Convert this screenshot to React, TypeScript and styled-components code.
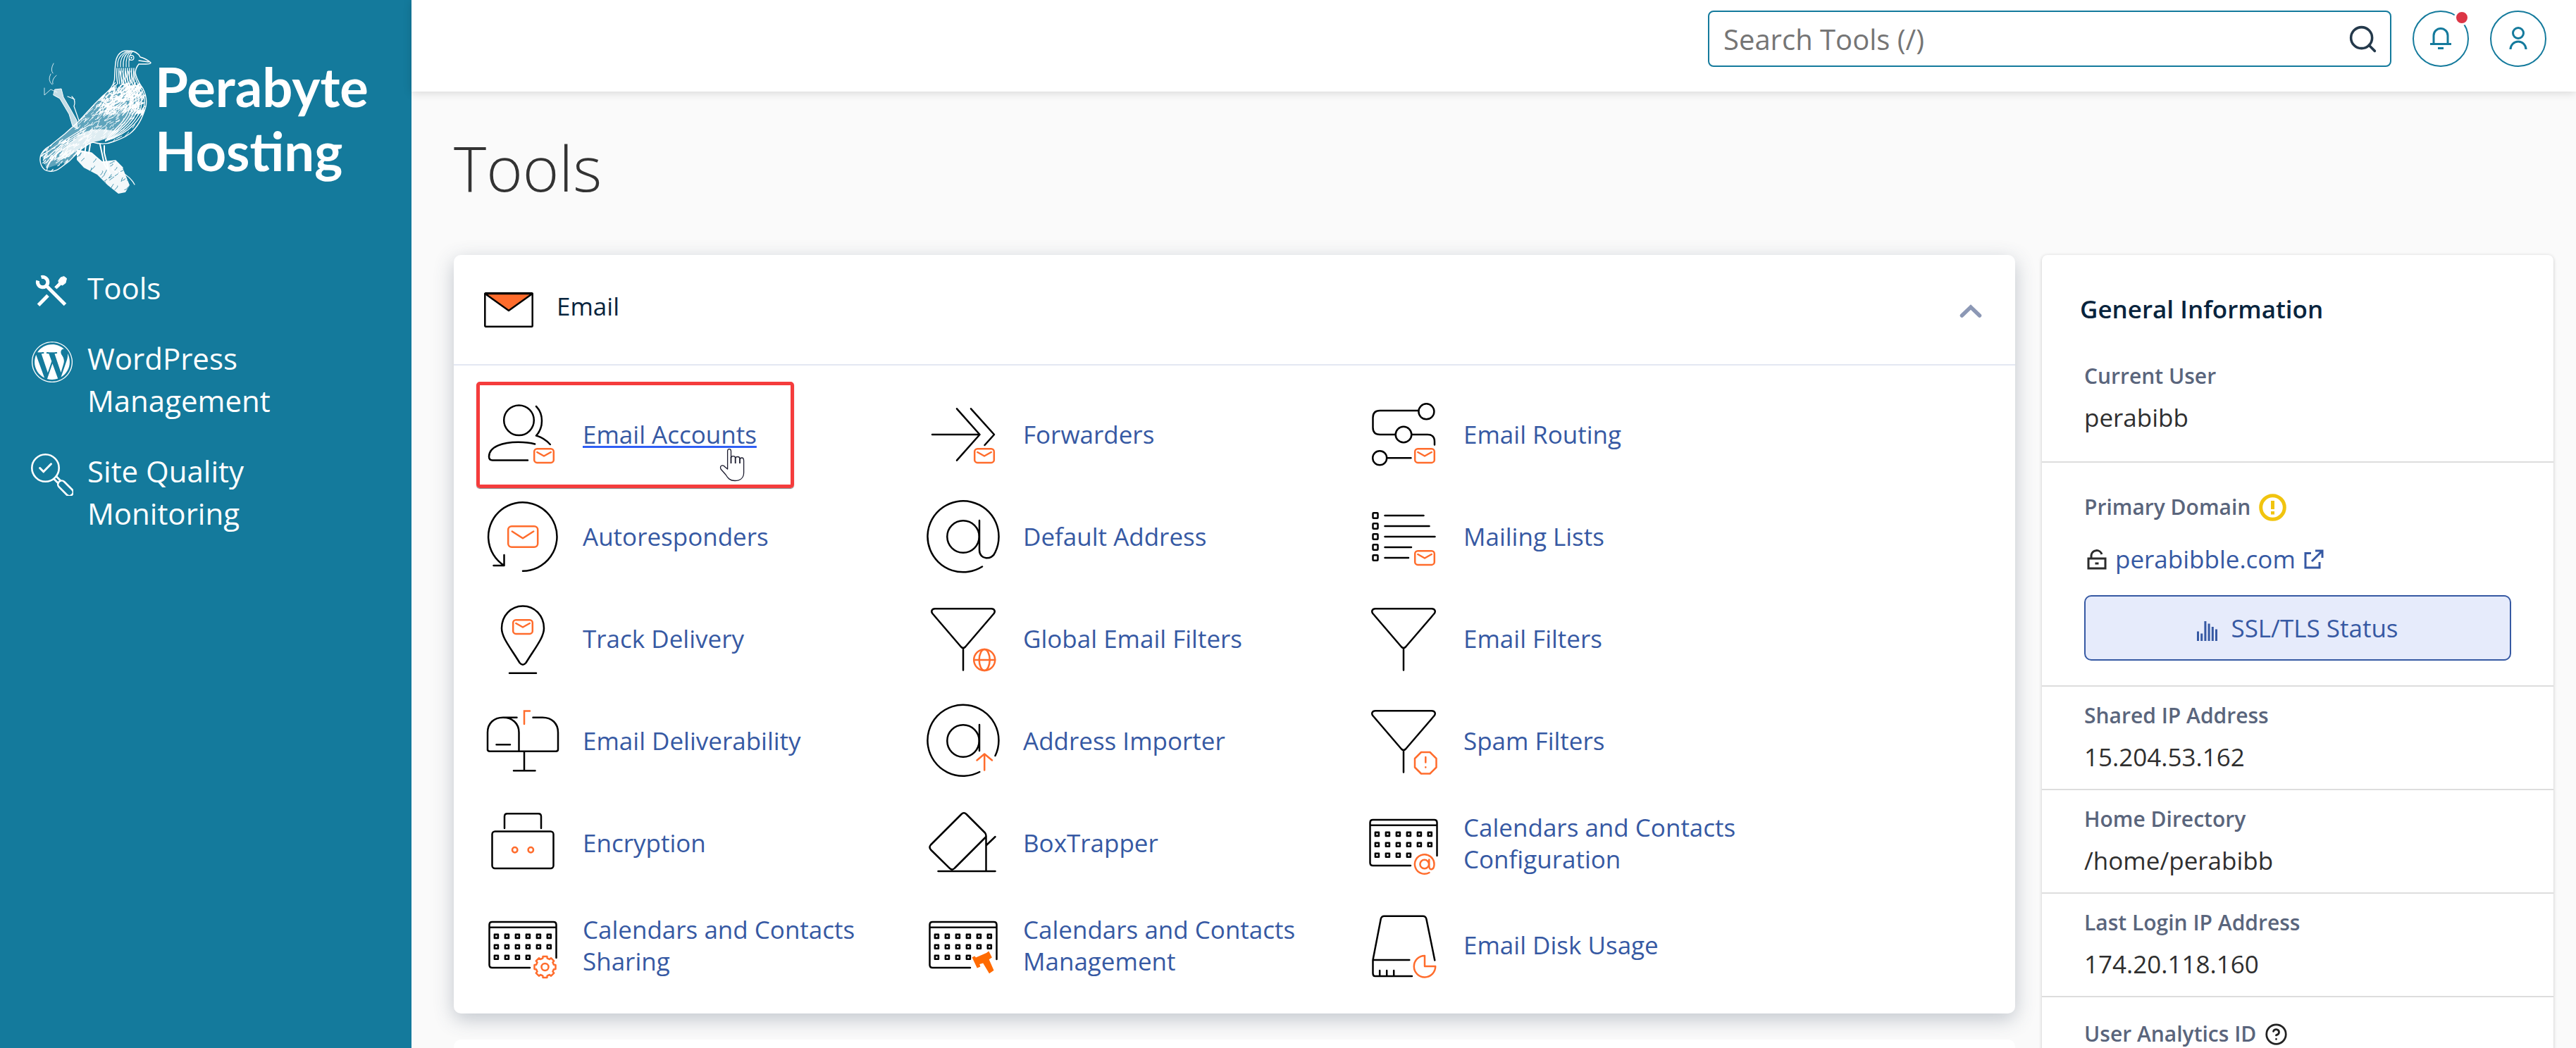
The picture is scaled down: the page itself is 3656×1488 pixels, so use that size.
import React from "react";
import styled, { createGlobalStyle } from "styled-components";
import { Search } from "lucide-react";
import { FaWordpress } from "react-icons/fa";

const color = {
  brand: "#147a9c",
  link: "#3659a3",
  ink: "#08243d",
  text: "#2f2f2f",
  muted: "#5a657c",
  orange: "#ff6c2c",
  page: "#fafafa",
};

const GlobalStyle = createGlobalStyle`
  *, *::before, *::after { box-sizing: border-box; }
  body {
    margin: 0;
    background: ${color.page};
    color: ${color.text};
    font-family: "Open Sans", "Noto Sans", sans-serif;
    font-size: 35px;
  }
  a { color: inherit; text-decoration: none; }
  button, input { font: inherit; }
`;

/* ---------- layout ---------- */

const Shell = styled.div`
  display: flex;
  height: 100vh;
  overflow: hidden;
`;

const Sidebar = styled.aside`
  flex: none;
  width: 584px;
  background: ${color.brand};
  color: #fff;
`;

const Page = styled.div`
  flex: 1;
  min-width: 0;
  display: flex;
  flex-direction: column;
`;

const Content = styled.main`
  flex: 1;
  min-height: 0;
  overflow: hidden;
  padding: 47px 32px 0 60px;
`;

const Title = styled.h1`
  margin: 0 0 63px;
  color: #333;
  font-size: 88px;
  font-weight: 300;
  line-height: 122px;
`;

const Columns = styled.div`
  display: grid;
  grid-template-columns: minmax(0, 1fr) 726px;
  align-items: start;
  gap: 38px;
`;

const Stack = styled.div`
  display: flex;
  flex-direction: column;
  gap: 37px;
`;

/* ---------- sidebar ---------- */

const Brand = styled.a`
  display: flex;
  align-items: flex-start;
  gap: 3px;
  padding: 71px 44px 84px 56px;
`;

const BrandName = styled.span`
  padding-top: 6px;
  font-family: Lato, "Open Sans", sans-serif;
  font-size: 76px;
  font-weight: 700;
  line-height: 91px;
`;

const Nav = styled.nav`
  display: flex;
  flex-direction: column;
`;

const NavLink = styled.a`
  display: flex;
  align-items: flex-start;
  gap: 20px;
  padding: 20px 60px 20px 44px;
  font-size: 42px;
  line-height: 60px;

  svg {
    flex: none;
    width: 60px;
    height: 60px;
    margin: 5px 0 -5px;
  }
`;

/* ---------- header ---------- */

const Topbar = styled.header`
  position: relative;
  display: flex;
  justify-content: flex-end;
  gap: 30px;
  padding: 15px 42px 35px;
  background: #fff;
  box-shadow: 0 2px 12px rgba(0, 0, 0, 0.14);
`;

const SearchBox = styled.label`
  display: flex;
  align-items: center;
  flex: 0 1 970px;
  height: 80px;
  padding: 0 16px 0 20px;
  border: 2px solid ${color.brand};
  border-radius: 8px;
  color: #24394b;
`;

const SearchInput = styled.input`
  flex: 1;
  min-width: 0;
  padding: 0;
  border: 0;
  outline: 0;
  background: none;
  font-size: 40px;

  &::placeholder { color: #757575; opacity: 1; }
`;

const RoundButton = styled.button`
  position: relative;
  display: flex;
  align-items: center;
  justify-content: center;
  width: 80px;
  height: 80px;
  padding: 0;
  border: 2px solid ${color.brand};
  border-radius: 50%;
  background: #fff;
  color: ${color.brand};
`;

const Badge = styled.span`
  position: absolute;
  top: -3px;
  right: -3px;
  width: 22px;
  height: 22px;
  border: 3px solid #fff;
  border-radius: 50%;
  background: #dc3545;
`;

/* ---------- tool group card ---------- */

const Card = styled.section`
  border-radius: 10px;
  background: #fff;
  box-shadow: 0 8px 28px rgba(60, 75, 100, 0.3);
`;

const NextCard = styled(Card)`
  height: 157px;
  box-shadow: none;
`;

const CardHeader = styled.button`
  display: flex;
  align-items: center;
  gap: 33px;
  width: 100%;
  height: 157px;
  padding: 0 47px 0 43px;
  border: 0;
  border-bottom: 2px solid #e3e7f2;
  background: none;
  color: ${color.ink};
  text-align: left;
`;

const CardTitle = styled.span`
  flex: 1;
  padding-bottom: 10px;
`;

const ToolGrid = styled.ul`
  display: grid;
  grid-template-columns: repeat(3, minmax(0, 32fr)) minmax(0, 15fr);
  grid-auto-rows: 145px;
  margin: 0;
  padding: 25px 0 25px 48px;
  list-style: none;
`;

const ToolCell = styled.li<{ $column: number }>`
  position: relative;
  grid-column: ${(p) => p.$column};
  display: flex;
  align-items: center;
`;

const ToolLink = styled.a<{ $hovered?: boolean }>`
  display: flex;
  align-items: center;
  gap: 35px;
  padding-right: 60px;
  color: ${color.link};
  line-height: 45px;

  span {
    text-decoration: ${(p) => (p.$hovered ? "underline" : "none")};
    text-decoration-color: #2f5ff5;
    text-decoration-thickness: 3px;
    text-underline-offset: 3px;
    text-decoration-skip-ink: none;
  }
`;

const ToolSvg = styled.svg`
  flex: none;
  width: 100px;
  height: 100px;
  overflow: visible;
  fill: none;
  stroke: #000;
  stroke-width: 2.5;
  stroke-linecap: round;
  stroke-linejoin: round;
`;

const Highlight = styled.span`
  position: absolute;
  top: -2px;
  left: -16px;
  width: 451px;
  height: 151px;
  border: 5px solid #f53c3c;
  border-radius: 5px;
  box-shadow: 0 1px 1px rgba(0, 0, 0, 0.5);
  pointer-events: none;
`;

const Pointer = styled.svg`
  position: absolute;
  top: 93px;
  left: 330px;
  width: 34px;
  height: 46px;
  overflow: visible;
`;

/* ---------- general information ---------- */

const InfoCard = styled.aside`
  border-radius: 8px;
  background: #fff;
  box-shadow: 0 1px 5px rgba(0, 0, 0, 0.2);
`;

const InfoTitle = styled.h2`
  margin: 0;
  padding: 52px 54px 29px;
  color: ${color.ink};
  font-size: 35px;
  font-weight: 600;
  line-height: 50px;
`;

const InfoList = styled.dl`
  margin: 0;
`;

const InfoRow = styled.div<{ $top?: number; $bottom?: number }>`
  padding: ${(p) => p.$top ?? 20}px 60px ${(p) => p.$bottom ?? 20}px;

  & + & { border-top: 2px solid #ddd; }
`;

const InfoLabel = styled.dt`
  display: flex;
  align-items: center;
  gap: 12px;
  height: 42px;
  color: ${color.muted};
  font-size: 30px;
  font-weight: 600;
  line-height: 42px;
`;

const InfoValue = styled.dd<{ $gap?: number }>`
  margin: ${(p) => p.$gap ?? 13}px 0 0;
  line-height: 50px;
`;

const DomainLine = styled.span`
  display: flex;
  align-items: center;
  gap: 12px;
  padding-left: 4px;
`;

const DomainLink = styled.a`
  display: flex;
  align-items: center;
  gap: 12px;
  color: ${color.link};
`;

const StatusButton = styled.button`
  display: flex;
  align-items: center;
  justify-content: center;
  gap: 19px;
  width: 100%;
  height: 93px;
  border: 2px solid ${color.link};
  border-radius: 10px;
  background: #e6ebfb;
  color: ${color.link};
  font-weight: 500;

  svg { margin-top: 8px; }
`;

/* ---------- drawings ---------- */

const Orange = ({ children }: { children: React.ReactNode }) => (
  <g stroke={color.orange}>{children}</g>
);

const MailBadge = ({ x = 0, y = 0 }: { x?: number; y?: number }) => (
  <g stroke={color.orange} transform={`translate(${x} ${y})`}>
    <rect x="66.2" y="70.3" width="27.6" height="19.6" rx="4" />
    <path d="M70.3 75 80 80.5 89.8 75" />
  </g>
);

const Calendar = ({ rightEnd = 68 }: { rightEnd?: number }) => (
  <>
    <path d={`M60 82H6.500Q2.500 82 2.500 78V21Q2.500 17 6.500 17H93.500Q97.500 17 97.500 21V${rightEnd}M2.500 24.700H97.500`} />
    {[37.4, 52.2, 67.2].map((cy, row) =>
      [12.4, 27.4, 42.4, 57.4, 72.4, 87.3]
        .slice(0, row === 2 ? 4 : 6)
        .map((cx) => (
          <rect key={`${cx}-${cy}`} x={cx - 2.5} y={cy - 2.5} width="5" height="5" strokeWidth="2.6" />
        ))
    )}
  </>
);

const Funnel = () => (
  <path d="M10 7.300H90C94.500 7.300 96 11 93.500 14.300L53 61.500Q50 64.500 47 61.500L6.500 14.300C4 11 5.500 7.300 10 7.300ZM50 63.500V94.500" />
);

const gearPath = (cx: number, cy: number) => {
  const points: string[] = [];
  for (let tooth = 0; tooth < 8; tooth++) {
    const middle = (tooth * Math.PI) / 4;
    [
      [-0.25, 12.8],
      [-0.19, 15.3],
      [0.19, 15.3],
      [0.25, 12.8],
    ].forEach(([turn, r]) => {
      const a = middle + turn;
      points.push(`${(cx + r * Math.cos(a)).toFixed(1)} ${(cy + r * Math.sin(a)).toFixed(1)}`);
    });
  }
  return `M${points.join("L")}Z`;
};

const drawings: Record<string, React.ReactNode> = {
  accounts: (
    <>
      <circle cx="44.500" cy="29.700" r="21.300" />
      <path d="M69 10Q77 18 77 30.500T69 51.500Q80 54.500 88.800 64M67.200 63.500C60 61.500 52 60.800 43.500 60.800C22 60.800 2 67 2 81.500Q2 86.500 7 86.500H57" />
      <MailBadge />
    </>
  ),
  forwarders: (
    <>
      <path d="M6 50H73.500M41 13.300 73.500 50 41 86.700M61 13.300 94 50 80.500 65" />
      <MailBadge />
    </>
  ),
  routing: (
    <>
      <circle cx="82.400" cy="17.300" r="11" />
      <circle cx="50" cy="50" r="11.300" />
      <circle cx="16.200" cy="83.300" r="10" />
      <path d="M71 16H16.500Q6.500 16 6.500 26V40Q6.500 50 16.500 50H38.500M61.500 50H84Q94 50 94 60V64.500M27 83.300H60.500" />
      <MailBadge />
    </>
  ),
  autoresponders: (
    <>
      <path d="M50 98.700A48.700 48.700 0 1 0 23.500 91M23.500 76V91H8.500" />
      <Orange>
        <rect x="29.200" y="35.200" width="42" height="29.600" rx="5" />
        <path d="M34.800 42.500 50 52.300 65.200 42.500" />
      </Orange>
    </>
  ),
  address: (
    <>
      <circle cx="50" cy="50" r="22.700" />
      <path d="M73 27V69C73 83 91 84 95.500 72Q100.500 62 100.500 50A50.500 50.500 0 1 0 77 92.500" />
    </>
  ),
  lists: (
    <>
      {[20, 35, 50, 65, 80].map((y, i) => (
        <g key={y}>
          <rect x="6.500" y={y - 3.8} width="7" height="7.600" rx="1" />
          <path d={`M23.500 ${y}H${[78.5, 86.5, 94.5, 61, 57][i]}`} />
        </g>
      ))}
      <MailBadge />
    </>
  ),
  track: (
    <>
      <path d="M50 3.500C67 3.500 80 17.500 80 35C80 48 68 62 54.500 84Q50 89.500 45.500 84C32 62 20 48 20 35C20 17.500 33 3.500 50 3.500ZM31 98.700H69" />
      <MailBadge x={-30} y={-47} />
    </>
  ),
  globalFilters: (
    <>
      <Funnel />
      <Orange>
        <circle cx="80.200" cy="80" r="15" />
        <ellipse cx="80.200" cy="80" rx="7.500" ry="15" />
        <path d="M65.200 80H95.200" />
      </Orange>
    </>
  ),
  filters: <Funnel />,
  deliverability: (
    <>
      <path d="M0 63V38C0 25 9 16.800 22 16.800S44.500 25 44.500 38V64.500M22 16.800H41.500M64.500 16.800H78C91 16.800 100 25 100 38V62Q100 64.700 97 64.700H3Q0 64.700 0 62M12.500 55.300H32M52 65V92.300M37 92.300H67.500" />
      <Orange>
        <path d="M52 26V7.500H60" strokeLinejoin="miter" />
      </Orange>
    </>
  ),
  importer: (
    <>
      <circle cx="50" cy="50" r="22.700" />
      <path d="M73 27V64M95.500 71A50.500 50.500 0 1 0 73.300 94" />
      <Orange>
        <path d="M80.200 91.500V69M69.500 77.500 80.200 68.500 91 77.500" />
      </Orange>
    </>
  ),
  spam: (
    <>
      <Funnel />
      <Orange>
        <path d="M75 66H87.500L96.500 75V87.500L87.500 96.500H75L66 87.500V75ZM81.300 73V80.500M81.300 87.300V87.500" />
      </Orange>
    </>
  ),
  encryption: (
    <>
      <path d="M24 29V12.300Q24 8.300 28 8.300H72Q76 8.300 76 12.300V29" />
      <rect x="6.500" y="33.500" width="87" height="52.500" rx="4" />
      <Orange>
        <circle cx="38.700" cy="59.700" r="3.700" />
        <circle cx="61.300" cy="59.700" r="3.700" />
      </Orange>
    </>
  ),
  trapper: (
    <path d="M82 41.500 38 85.500Q34.300 89.500 30.600 85.700L4 59.500Q1 56 4 52.500L47.500 9Q51 5.500 54.500 9L81 35.500Q82.500 37.500 82.500 40V90M83 53 95.500 41M14.500 90.100H95.500" />
  ),
  calendarConfig: (
    <>
      <Calendar />
      <Orange>
        <circle cx="79.700" cy="80" r="6.300" />
        <path d="M86.300 73.500V82.500C86.300 90 93.500 88.500 93.500 80A13.800 13.800 0 1 0 86.500 92" />
      </Orange>
    </>
  ),
  calendarSharing: (
    <>
      <Calendar />
      <Orange>
        <path d={gearPath(81.5, 81)} />
        <circle cx="81.500" cy="81" r="5" />
      </Orange>
    </>
  ),
  calendarManagement: (
    <>
      <Calendar rightEnd={70} />
      <path
        fill="#ff6a00"
        stroke="none"
        d="M62.600 67.300 66.400 65.600 68 67.600 83 61 86.300 58.600 90.900 67.600 86.700 70.300 93.500 85.800 87 90.200 78.200 75.400 73.300 77 74.400 80.400 69.800 82.500Z"
      />
    </>
  ),
  disk: (
    <>
      <path d="M6.500 71 17.800 12.500Q18.800 8.700 22.500 8.700H77.500Q81.300 8.700 82.300 12.500L94.300 71.400M6.500 71V90Q6.500 94 9.500 94H62M6.500 71H58.300M16.200 86V94M26.200 86V94M36.200 86V94" />
      <Orange>
        <path d="M80 65V80H95.200A15.200 15.200 0 1 1 80 65Z" />
      </Orange>
    </>
  ),
};

const BIRD =
  "M126 1C118 0 112 4 109 13C107 21 107 32 106.500 42C105 51 100 57 90 65L78 77L55 102L36 119L15 136C6 141 0 147 1 157C2 166 7 172 14 172C21 173 25 171 30 167L42 158L59 141C65 137 70 132 76 131C86 134 96 134 105 130C114 127 121 124 128 119C137 112 146 98 151 80C153 70 151 63 147 55C142 48 139 43 137 36C135 30 137 25 141 20L151 20Q158 20 158 18Q151 12 143 10C140 4 134 1 126 1Z";

/* Repeatable pseudo-random values give the engraving its texture. */
const sequence = (seed: number) => () => {
  seed = (seed * 16807) % 2147483647;
  return seed / 2147483647;
};

const flecks = (count: number, seed: number, x: number, y: number, w: number, h: number) => {
  const next = sequence(seed);
  let d = "";
  for (let i = 0; i < count; i++) {
    const px = x + next() * w;
    const py = y + next() * h;
    const bend = next() * 4 - 2;
    d += `M${px.toFixed(1)} ${py.toFixed(1)}q${bend.toFixed(1)} 1 ${(-2 - next() * 4).toFixed(1)} ${(2 + next() * 4).toFixed(1)}`;
  }
  return d;
};

const BirdLogo = () => (
  <svg width="161" height="204" viewBox="0 0 161 204" fill="none" stroke="#fff" strokeLinecap="round" aria-hidden="true">
    <defs>
      <clipPath id="bird-body">
        <path d={BIRD} />
      </clipPath>
      <clipPath id="bird-perch">
        <path d="M53 142L74 146L89 159L108 157L118 167L128 192L122 202L112 204L97 192L82 177L63 167L53 156Z" />
      </clipPath>
    </defs>
    <path d="M22 56 31 55 34 67 44 84 53 100 54 112 47 108 42 91 29 69 20 64Z" fill="#fff" fillOpacity="0.75" strokeWidth="1" />
    <path d="M20 19Q15 28 19 33M16 34Q11 43 18 49M24 36Q17 42 19 48M7 54V64L16 56L25 60" strokeWidth="0.8" />
    <path d="M46 66Q52 71 49 80L56 100M40 66 50 70" strokeWidth="1.200" />
    <g clipPath="url(#bird-perch)">
      <rect x="50" y="140" width="90" height="66" fill="#fff" fillOpacity="0.95" stroke="none" />
      <path d={flecks(60, 77, 55, 142, 85, 60)} stroke={color.brand} strokeWidth="0.8" />
    </g>
    <path d="M53 142 74 146 89 159 108 157 118 167M112 172Q128 178 135 191M108 160 103 170 118 178" strokeWidth="1.300" />
    <path d="M86 134 92 162 100 176M92 136 92 146 98 170" strokeWidth="2" />
    <path d="M60 138 54 150M66 134 64 150M72 134 70 147" strokeWidth="2" />
    <path d={BIRD} strokeWidth="1.400" />
    <g clipPath="url(#bird-body)">
      <path d="M36 119 95 62Q138 42 146 62Q142 110 76 131L40 158 10 168 3 150Z" fill="#fff" fillOpacity="0.32" stroke="none" />
      <path d="M60 118Q80 108 112 116Q95 128 76 131L56 141 40 152 24 158 34 140Z" fill="#fff" fillOpacity="0.8" stroke="none" />
      <path d={flecks(400, 11, 84, 46, 66, 42)} strokeWidth="1.300" />
      <path d={flecks(150, 29, 56, 78, 80, 50)} strokeWidth="1" />
      <path d={flecks(150, 53, 4, 116, 72, 56)} strokeWidth="1.200" />
      {[0, 4, 8, 12, 16, 20].map((o) => (
        <path key={o} d={`M${134 - o} 30Q${136 - o} 46 ${146 - o} 58Q${156 - o} 82 ${134 - o} 106Q${118 - o} 122 94 129`} strokeWidth="1.3" />
      ))}
      {[0, 3, 6, 9, 12, 15, 18, 21, 24].map((o) => (
        <path key={o} d={`M${110 + o} 26Q${109 + o} 38 ${111 + o} 48`} strokeWidth="1.400" />
      ))}
      {[0, 4, 8, 12, 16].map((o) => (
        <path key={o} d={`M${111 + o} 24Q${110 + o} 8 ${124 + o / 2} 2`} strokeWidth="1.2" />
      ))}
      {[0, 7, 14, 21, 28].map((o) => (
        <path key={o} d={`M${72 - o} ${106 + o}Q${40 - o} ${124 + o} ${10} ${146 + o}`} strokeWidth="1.200" />
      ))}
    </g>
    <circle cx="130.500" cy="11" r="3.400" fill={color.brand} strokeWidth="1.300" />
    <circle cx="130.500" cy="11" r="1.200" fill="#fff" stroke="none" />
    <path d="M141 15 155 17" strokeWidth="1.300" />
  </svg>
);

const ToolsIcon = () => (
  <svg viewBox="0 0 60 60" fill="none" stroke="#fff" strokeLinecap="round" aria-hidden="true">
    <path d="M14.500 9.700A7.200 7.200 0 1 1 9.700 14.500" strokeWidth="5" strokeLinecap="butt" />
    <path d="M22 22 48.500 48.500M24 35.500 10.500 49.300" strokeWidth="5" strokeLinecap="butt" />
    <path fill="#fff" strokeWidth="1" d="M47 8.700 50.500 11.300 49 17.700 44.800 21 42.500 20.300 36.400 26 33.700 23.300 39.400 17.700 39 14.300 42 10.300Z" />
  </svg>
);

const QualityIcon = () => (
  <svg viewBox="0 0 60 60" fill="none" stroke="#fff" strokeWidth="2.600" strokeLinecap="round" strokeLinejoin="round" aria-hidden="true">
    <circle cx="20.500" cy="20.500" r="19.200" />
    <path d="M12.600 20.500 17.700 25.800 28.500 14.800" strokeWidth="3" />
    <path d="M33 36.500 38.500 42M36.500 33 42 38.500" />
    <rect x="36" y="44" width="26" height="10.500" rx="5.200" transform="rotate(45 49 49.200)" />
  </svg>
);

const BellIcon = () => (
  <svg width="30" height="32" viewBox="0 0 30 32" fill="none" stroke="currentColor" strokeWidth="3" aria-hidden="true">
    <path d="M5 23.500V11.500A10 10 0 0 1 25 11.500V23.500M0 23.500H30M11 29.500H19" />
  </svg>
);

const UserIcon = () => (
  <svg width="26" height="34" viewBox="0 0 26 34" fill="none" stroke="currentColor" strokeWidth="3" aria-hidden="true">
    <circle cx="13" cy="9" r="7.500" />
    <path d="M2 32A11 11 0 0 1 24 32" />
  </svg>
);

const EnvelopeIcon = () => (
  <svg width="70" height="50" viewBox="0 0 70 50" stroke="#000" strokeWidth="2.500" strokeLinejoin="round" aria-hidden="true">
    <rect x="1.300" y="1.300" width="67.400" height="47.400" rx="1" fill="#fff" />
    <path d="M1.500 2H68.500L35 26Z" fill={color.orange} />
  </svg>
);

const ChevronIcon = () => (
  <svg width="32" height="22" viewBox="0 0 32 22" fill="none" stroke="#8c98b5" strokeWidth="5.500" strokeLinecap="round" aria-hidden="true">
    <path d="M3.500 19 16 7 28.500 19" />
  </svg>
);

const WarningIcon = () => (
  <svg width="39" height="39" viewBox="0 0 39 39" fill="none" stroke="#f1c40f" strokeWidth="5" aria-hidden="true">
    <circle cx="19.500" cy="19.500" r="16.800" strokeWidth="5" />
    <path d="M19.500 10V22M19.500 25V29.500" />
  </svg>
);

const HelpIcon = () => (
  <svg width="33" height="33" viewBox="0 0 24 24" fill="none" stroke="#222" strokeWidth="2" strokeLinecap="round" aria-hidden="true">
    <circle cx="12" cy="12" r="10" />
    <path d="M9.090 9a3 3 0 0 1 5.830 1c0 2-3 3-3 3M12 17h.01" />
  </svg>
);

const LockIcon = () => (
  <svg width="28" height="30" viewBox="0 0 28 30" fill="none" stroke="#2b2b2b" strokeWidth="3" aria-hidden="true">
    <rect x="2" y="14" width="24" height="14" />
    <path d="M6 14V9.500A7.700 7.700 0 0 1 21 8M11.500 21H16.500" />
  </svg>
);

const ExternalIcon = () => (
  <svg width="28" height="28" viewBox="0 0 28 28" fill="none" stroke="currentColor" strokeWidth="3" aria-hidden="true">
    <path d="M10 5.500H2V26H22V18M16 2H26V12M26 2 11 17" />
  </svg>
);

const BarsIcon = () => (
  <svg width="29" height="28" viewBox="0 0 29 28" fill="currentColor" aria-hidden="true">
    {[14.5, 17.5, 0, 3.5, 8, 11.5].map((y, i) => (
      <rect key={y} x={i * 5.2} y={y} width="3" height={28 - y} />
    ))}
  </svg>
);

const HandPointer = () => (
  <Pointer viewBox="0 0 34 46" fill="none" stroke="#1b1b2e" strokeWidth="1.300" strokeLinejoin="round" aria-hidden="true">
    <path
      fill="#fff"
      d="M10.600 29V3.500Q10.600 .7 13 .7T15.500 3.500V13Q15.500 10.700 18.500 10.700T21.700 13.500Q22 11.500 25 11.500T28 15Q28.500 13 31 13T33.600 17V34C33.600 42 28 45.500 21 45.500C14 45.500 11 42 8 37L1 29Q-.5 25 2.500 24Q5 23.500 7 26Z"
    />
    <path d="M15.500 12V21M21.700 13V21M28 14V21" strokeWidth="1.800" />
  </Pointer>
);

/* ---------- data ---------- */

const tools = [
  { name: "Email Accounts", icon: "accounts", hovered: true },
  { name: "Forwarders", icon: "forwarders" },
  { name: "Email Routing", icon: "routing" },
  { name: "Autoresponders", icon: "autoresponders" },
  { name: "Default Address", icon: "address" },
  { name: "Mailing Lists", icon: "lists" },
  { name: "Track Delivery", icon: "track" },
  { name: "Global Email Filters", icon: "globalFilters" },
  { name: "Email Filters", icon: "filters" },
  { name: "Email Deliverability", icon: "deliverability" },
  { name: "Address Importer", icon: "importer" },
  { name: "Spam Filters", icon: "spam" },
  { name: "Encryption", icon: "encryption" },
  { name: "BoxTrapper", icon: "trapper" },
  { name: "Calendars and Contacts Configuration", icon: "calendarConfig" },
  { name: "Calendars and Contacts Sharing", icon: "calendarSharing" },
  { name: "Calendars and Contacts Management", icon: "calendarManagement" },
  { name: "Email Disk Usage", icon: "disk" },
];

const addresses = [
  { label: "Shared IP Address", value: "15.204.53.162" },
  { label: "Home Directory", value: "/home/perabibb" },
  { label: "Last Login IP Address", value: "174.20.118.160" },
];

export default function App() {
  return (
    <>
      <GlobalStyle />
      <Shell>
        <Sidebar>
          <Brand href="#home">
            <BirdLogo />
            <BrandName>
              Perabyte
              <br />
              Hosting
            </BrandName>
          </Brand>
          <Nav aria-label="Main">
            <NavLink href="#tools">
              <ToolsIcon />
              <span>Tools</span>
            </NavLink>
            <NavLink href="#wordpress">
              <FaWordpress aria-hidden="true" />
              <span>WordPress Management</span>
            </NavLink>
            <NavLink href="#quality">
              <QualityIcon />
              <span>Site Quality Monitoring</span>
            </NavLink>
          </Nav>
        </Sidebar>

        <Page>
          <Topbar>
            <SearchBox>
              <SearchInput type="text" placeholder="Search Tools (/)" aria-label="Search Tools" />
              <Search size={45} strokeWidth={1.9} aria-hidden="true" />
            </SearchBox>
            <RoundButton type="button" aria-label="Notifications">
              <BellIcon />
              <Badge />
            </RoundButton>
            <RoundButton type="button" aria-label="Account">
              <UserIcon />
            </RoundButton>
          </Topbar>

          <Content>
            <Title>Tools</Title>
            <Columns>
              <Stack>
                <Card>
                  <CardHeader type="button" aria-expanded="true">
                    <EnvelopeIcon />
                    <CardTitle>Email</CardTitle>
                    <ChevronIcon />
                  </CardHeader>
                  <ToolGrid>
                    {tools.map((tool, i) => (
                      <ToolCell key={tool.name} $column={(i % 3) + 1}>
                        <ToolLink href={`#${tool.icon}`} $hovered={tool.hovered}>
                          <ToolSvg viewBox="0 0 100 100" aria-hidden="true">
                            {drawings[tool.icon]}
                          </ToolSvg>
                          <span>{tool.name}</span>
                        </ToolLink>
                        {tool.hovered && (
                          <>
                            <Highlight />
                            <HandPointer />
                          </>
                        )}
                      </ToolCell>
                    ))}
                  </ToolGrid>
                </Card>
                <NextCard />
              </Stack>

              <InfoCard>
                <InfoTitle>General Information</InfoTitle>
                <InfoList>
                  <InfoRow $bottom={37}>
                    <InfoLabel>Current User</InfoLabel>
                    <InfoValue>perabibb</InfoValue>
                  </InfoRow>
                  <InfoRow $top={42} $bottom={35}>
                    <InfoLabel>
                      Primary Domain
                      <WarningIcon />
                    </InfoLabel>
                    <InfoValue $gap={28}>
                      <DomainLine>
                        <LockIcon />
                        <DomainLink href="#domain">
                          perabibble.com
                          <ExternalIcon />
                        </DomainLink>
                      </DomainLine>
                    </InfoValue>
                    <InfoValue $gap={26}>
                      <StatusButton type="button">
                        <BarsIcon />
                        SSL/TLS Status
                      </StatusButton>
                    </InfoValue>
                  </InfoRow>
                  {addresses.map((row) => (
                    <InfoRow key={row.label}>
                      <InfoLabel>{row.label}</InfoLabel>
                      <InfoValue>{row.value}</InfoValue>
                    </InfoRow>
                  ))}
                  <InfoRow $top={31}>
                    <InfoLabel>
                      User Analytics ID
                      <HelpIcon />
                    </InfoLabel>
                  </InfoRow>
                </InfoList>
              </InfoCard>
            </Columns>
          </Content>
        </Page>
      </Shell>
    </>
  );
}
